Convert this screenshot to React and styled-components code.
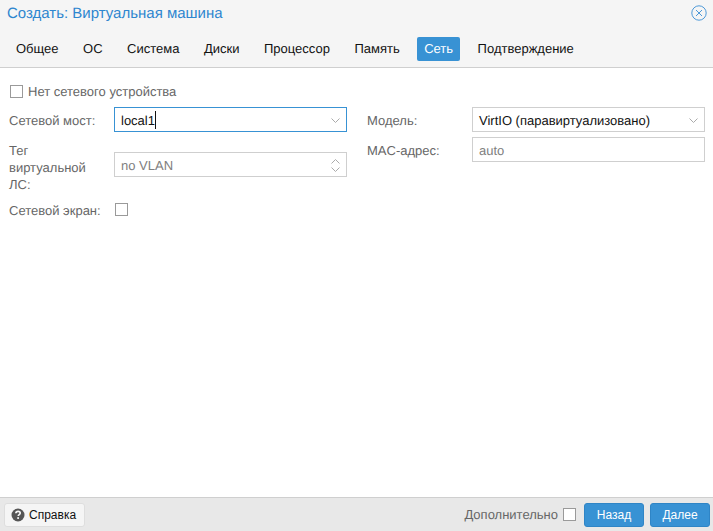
import React from "react";
import styled, { createGlobalStyle } from "styled-components";

const GlobalStyle = createGlobalStyle`
  html, body {
    margin: 0;
    padding: 0;
    height: 100%;
    background: #fff;
    font-family: "Liberation Sans", Arial, sans-serif;
    text-rendering: geometricPrecision;
  }
  #root {
    height: 100%;
  }
`;

const tabs = ["Общее", "ОС", "Система", "Диски", "Процессор", "Память", "Сеть", "Подтверждение"];

export default function App() {
  return (
    <Dialog>
      <GlobalStyle />
      <Header>
        <TitleBar>
          <Title>Создать: Виртуальная машина</Title>
          <CloseIcon width="16" height="16" viewBox="0 0 16 16">
            <circle cx="8" cy="8" r="7.2" />
            <path d="M5 5l6 6M11 5l-6 6" />
          </CloseIcon>
        </TitleBar>
        <TabBar>
          {tabs.map((tab) => (
            <Tab key={tab} $active={tab === "Сеть"}>
              {tab}
            </Tab>
          ))}
        </TabBar>
      </Header>

      <Body>
        <TopCheckRow>
          <CheckBox />
          <MutedLabel>Нет сетевого устройства</MutedLabel>
        </TopCheckRow>
        <Columns>
          <Column>
            <FieldRow>
              <FieldLabel>Сетевой мост:</FieldLabel>
              <InputBox $focused>
                <InputText>
                  local1
                  <Caret />
                </InputText>
                <Chevron />
              </InputBox>
            </FieldRow>
            <TallRow>
              <FieldLabel>Тег виртуальной ЛС:</FieldLabel>
              <TallInputBox>
                <Placeholder>no VLAN</Placeholder>
                <Spinner />
              </TallInputBox>
            </TallRow>
            <FieldRow>
              <FieldLabel>Сетевой экран:</FieldLabel>
              <FieldCheckBox />
            </FieldRow>
          </Column>
          <Column>
            <FieldRow>
              <FieldLabel>Модель:</FieldLabel>
              <InputBox>
                <InputText>VirtIO (паравиртуализовано)</InputText>
                <Chevron />
              </InputBox>
            </FieldRow>
            <FieldRow>
              <FieldLabel>MAC-адрес:</FieldLabel>
              <InputBox>
                <Placeholder>auto</Placeholder>
              </InputBox>
            </FieldRow>
          </Column>
        </Columns>
      </Body>

      <Footer>
        <HelpButton>
          <HelpIcon width="14" height="14" viewBox="0 0 14 14">
            <circle cx="7" cy="7" r="6.5" />
            <path d="M4.9 5.3c0-1.3 1-2 2.2-2s2.1.7 2.1 1.8c0 1.5-1.9 1.5-1.9 2.8" />
            <rect x="6.2" y="9.2" width="1.8" height="1.7" />
          </HelpIcon>
          Справка
        </HelpButton>
        <FooterRight>
          <AdvancedLabel>Дополнительно</AdvancedLabel>
          <CheckBox />
          <PrimaryButton>Назад</PrimaryButton>
          <PrimaryButton>Далее</PrimaryButton>
        </FooterRight>
      </Footer>
    </Dialog>
  );
}

function Chevron() {
  return (
    <Arrow width="9" height="5" viewBox="0 0 9 5">
      <path d="M.5.5l4 4 4-4" />
    </Arrow>
  );
}

function Spinner() {
  return (
    <SpinnerWrap>
      <Arrow width="9" height="5" viewBox="0 0 9 5">
        <path d="M.5 4.5l4-4 4 4" />
      </Arrow>
      <Arrow width="9" height="5" viewBox="0 0 9 5">
        <path d="M.5.5l4 4 4-4" />
      </Arrow>
    </SpinnerWrap>
  );
}

const Dialog = styled.div`
  width: 713px;
  height: 531px;
  display: flex;
  flex-direction: column;
  overflow: hidden;
  background: #fff;
`;

const Header = styled.header`
  height: 67px;
  background: #f5f5f5;
  border-bottom: 1px solid #cfcfcf;
`;

const TitleBar = styled.div`
  height: 26px;
  display: flex;
  align-items: center;
  justify-content: space-between;
  padding: 0 6px 0 7px;
`;

const Title = styled.div`
  font-size: 15px;
  color: #2e86cf;
`;

const CloseIcon = styled.svg`
  fill: none;
  stroke: #4f9ad8;
  stroke-width: 1;
`;

const TabBar = styled.nav`
  display: flex;
  align-items: center;
  gap: 10.5px;
  padding: 11px 0 0 9px;
`;

const Tab = styled.div`
  height: 24px;
  line-height: 24px;
  padding: 0 7px;
  font-size: 13px;
  border-radius: 2px;
  color: ${({ $active }) => ($active ? "#fff" : "#111")};
  background: ${({ $active }) => ($active ? "#3892d4" : "transparent")};
`;

const Body = styled.main`
  flex: 1;
  padding: 15px 8px 0 9px;
`;

const TopCheckRow = styled.div`
  height: 16px;
  display: flex;
  align-items: center;
  gap: 5px;
  margin-bottom: 8px;
  padding-left: 1px;
`;

const CheckBox = styled.span`
  width: 13px;
  height: 13px;
  flex: none;
  box-sizing: border-box;
  background: #fff;
  border: 1px solid #9a9a9a;
`;

const FieldCheckBox = styled(CheckBox)`
  margin-left: 1px;
`;

const MutedLabel = styled.span`
  font-size: 13px;
  color: #666;
`;

const Columns = styled.div`
  display: grid;
  grid-template-columns: 338px 338px;
  column-gap: 20px;
`;

const Column = styled.div`
  display: flex;
  flex-direction: column;
  gap: 5px;
`;

const FieldRow = styled.div`
  display: grid;
  grid-template-columns: 105px 1fr;
  align-items: center;
  min-height: 25px;
`;

const TallRow = styled(FieldRow)`
  align-items: start;
  padding-top: 3px;
  margin-bottom: -1px;
`;

const FieldLabel = styled.label`
  font-size: 13px;
  line-height: 17px;
  color: #666;
  padding: 2px 6px 0 0;
`;

const InputBox = styled.div`
  height: 25px;
  box-sizing: border-box;
  display: flex;
  align-items: center;
  justify-content: space-between;
  padding: 1px 6px 0;
  background: #fff;
  border: 1px solid ${({ $focused }) => ($focused ? "#3892d4" : "#cfcfcf")};
  font-size: 13px;
`;

const TallInputBox = styled(InputBox)`
  margin-top: 12px;
`;

const InputText = styled.span`
  color: #111;
  display: flex;
  align-items: center;
`;

const Caret = styled.span`
  width: 1px;
  height: 18px;
  background: #111;
`;

const Placeholder = styled.span`
  color: #808080;
`;

const Arrow = styled.svg`
  display: block;
  fill: none;
  stroke: #aaa;
  stroke-width: 1;
`;

const SpinnerWrap = styled.div`
  display: flex;
  flex-direction: column;
  gap: 3px;
`;

const Footer = styled.footer`
  height: 33px;
  display: flex;
  align-items: center;
  justify-content: space-between;
  padding: 0 3px 0 4px;
  background: #e8e8e8;
  border-top: 1px solid #cfcfcf;
`;

const HelpButton = styled.button`
  height: 24px;
  display: flex;
  align-items: center;
  gap: 4px;
  padding: 0 8px 0 6px;
  font: 12px "Liberation Sans", Arial, sans-serif;
  color: #111;
  background: #f5f5f5;
  border: 1px solid #dedede;
  border-radius: 3px;
`;

const HelpIcon = styled.svg`
  circle {
    fill: #555;
  }
  path {
    fill: none;
    stroke: #f5f5f5;
    stroke-width: 1.7;
  }
  rect {
    fill: #f5f5f5;
  }
`;

const FooterRight = styled.div`
  display: flex;
  align-items: center;
`;

const AdvancedLabel = styled.span`
  font-size: 13px;
  color: #666;
  margin-right: 5px;
`;

const PrimaryButton = styled.button`
  width: 60px;
  height: 24px;
  margin-left: 6px;
  font: 12px "Liberation Sans", Arial, sans-serif;
  color: #fff;
  background: #3892d4;
  border: 1px solid #2f85c6;
  border-radius: 3px;

  &:first-of-type {
    margin-left: 8px;
  }
`;
